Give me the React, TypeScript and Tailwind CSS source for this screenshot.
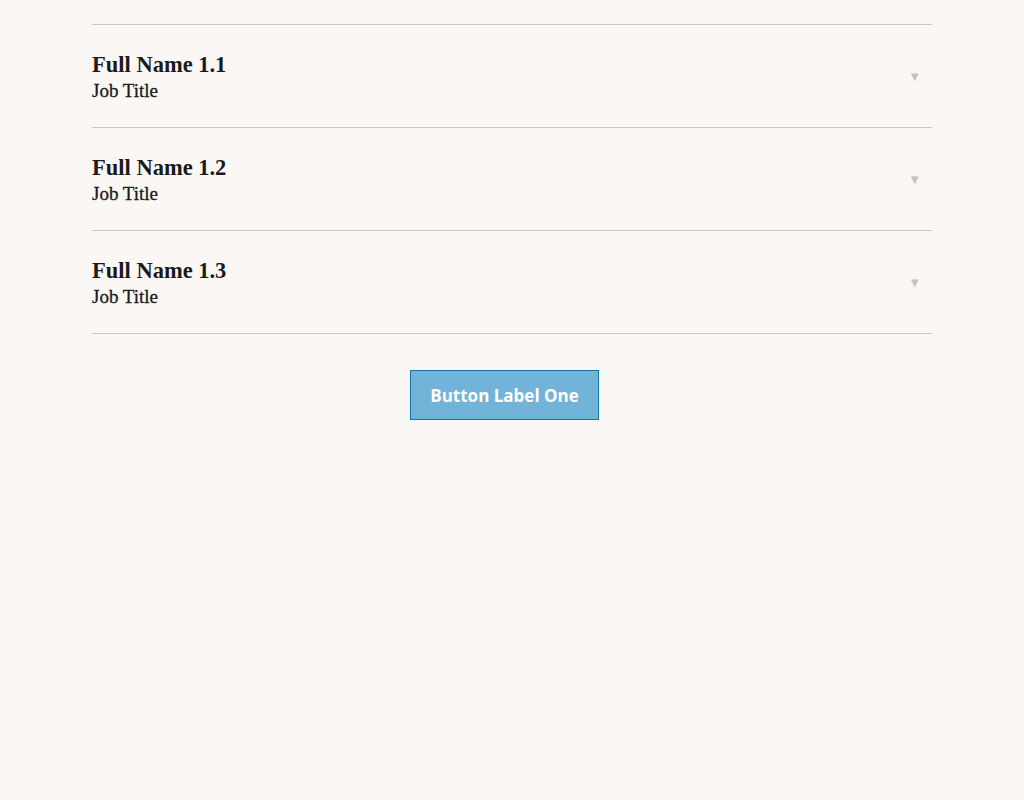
import React from 'react';

const people = [
  { name: 'Full Name 1.1', title: 'Job Title' },
  { name: 'Full Name 1.2', title: 'Job Title' },
  { name: 'Full Name 1.3', title: 'Job Title' },
];

const App: React.FC = () => {
  return (
    <div className="min-h-[800px] bg-[#faf7f4] pt-6">
      <div className="mx-auto w-[840px]">
        <ul className="border-b border-[#cbc8c5]">
          {people.map((p) => (
            <li
              key={p.name}
              className="flex h-[103px] items-center justify-between border-t border-[#cbc8c5]"
            >
              <div className="pt-[4px] font-['Liberation_Serif',serif] text-[#1a1a1a]">
                <div className="text-[22.5px] font-bold leading-[26px]">{p.name}</div>
                <div className="text-[19px] leading-[26px] [-webkit-text-stroke:0.3px_#1a1a1a]">{p.title}</div>
              </div>
              <span className="mr-[11px] text-[13px] leading-none text-[#c4c2c0]">▼</span>
            </li>
          ))}
        </ul>
        <div className="flex justify-center pr-[15px] pt-[36px]">
          <button className="h-[50px] w-[189px] border border-[#0e77b0] bg-[#71b3d9] pt-[2px] font-['Open_Sans',sans-serif] text-[17px] font-bold text-white">
            Button Label One
          </button>
        </div>
      </div>
    </div>
  );
};

export default App;
